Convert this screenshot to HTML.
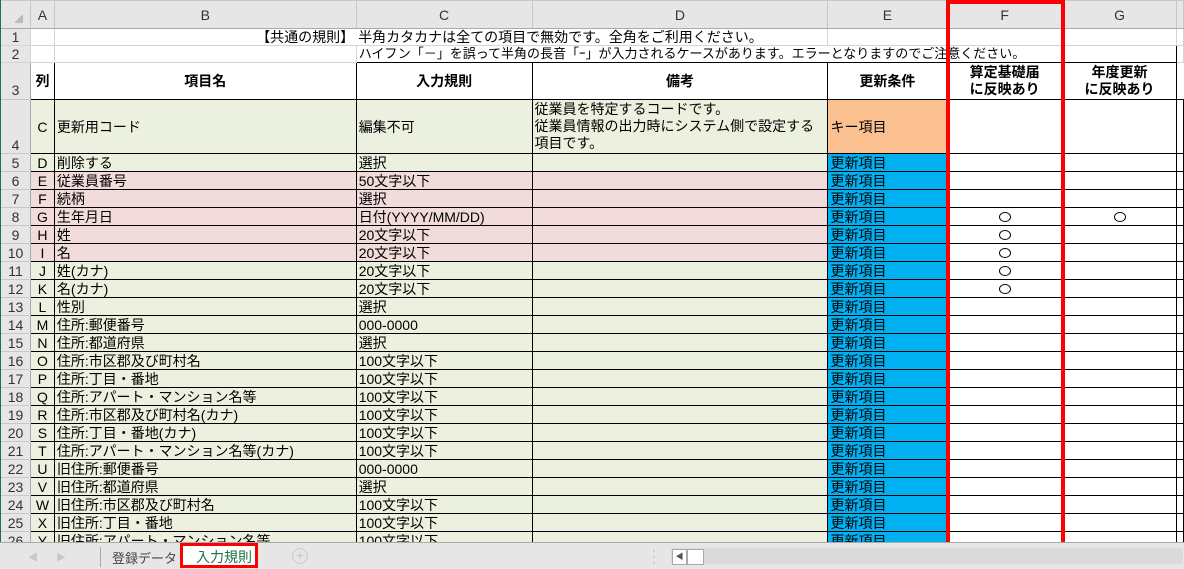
<!DOCTYPE html>
<html><head><meta charset="utf-8">
<style>
*{margin:0;padding:0;box-sizing:border-box}
body{width:1184px;height:569px;overflow:hidden;background:#fff;position:relative;font-family:"Liberation Sans","Noto Sans CJK JP",sans-serif;font-size:14px;color:#000}
table{position:absolute;left:0;top:0;border-collapse:collapse;table-layout:fixed}
td{padding:0 2px;white-space:nowrap;overflow:visible;line-height:16px;vertical-align:bottom;border:1px solid #000}
.h td{background:#e6e6e6;color:#333;text-align:center;border:1px solid #c8c8c8;border-bottom:1px solid #aaa;vertical-align:middle;font-size:14px}
td.n{background:#e6e6e6;color:#333;text-align:center;border:1px solid #c8c8c8;border-right:1px solid #aaa;font-size:14px}
.g{background:#ebf1de}.p{background:#f2dcdb}.b{background:#00b0f0}.o{background:#fac090}
.c{text-align:center}
.l td{border-color:#d4d4d4}
.hd td{font-weight:bold;text-align:center;vertical-align:middle;line-height:17px}
.ov{position:relative}
.ov span{position:absolute;left:2px;bottom:0}
i.m{display:inline-block;width:12px;height:10px;border:1px solid #000;border-radius:50%;vertical-align:middle;margin-bottom:2px}
</style></head><body>
<table>
<colgroup><col style="width:30px"><col style="width:24px"><col style="width:302px"><col style="width:176px"><col style="width:296px"><col style="width:119px"><col style="width:116px"><col style="width:114px"><col style="width:7px"></colgroup>
<tr class="h" style="height:28px"><td style="border-left:0"><span style="display:inline-block;width:0;height:0;border-left:9px solid transparent;border-bottom:9px solid #bbb;margin:10px 0 0 6px"></span></td><td>A</td><td>B</td><td>C</td><td>D</td><td>E</td><td>F</td><td>G</td><td></td></tr>
<tr class="l" style="height:17px"><td class="n">1</td><td></td><td style="text-align:right;border-right:0">【共通の規則】</td><td class="ov" style="border-left:0;border-right:0"><span>半角カタカナは全ての項目で無効です。全角をご利用ください。</span></td><td style="border-left:0"></td><td></td><td></td><td></td><td></td></tr>
<tr class="l" style="height:17px"><td class="n">2</td><td></td><td></td><td class="ov" style="border-right:0;border-bottom-color:#000"><span style="font-size:13px">ハイフン「－」を誤って半角の長音「ｰ」が入力されるケースがあります。エラーとなりますのでご注意ください。</span></td><td style="border-left:0;border-right:0;border-bottom-color:#000"></td><td style="border-left:0;border-right:0;border-bottom-color:#000"></td><td style="border-left:0;border-bottom-color:#000"></td><td style="border-bottom-color:#000;border-right-color:#000"></td><td></td></tr>
<tr class="hd" style="height:37px"><td class="n" style="vertical-align:bottom;font-weight:normal">3</td><td>列</td><td>項目名</td><td>入力規則</td><td>備考</td><td>更新条件</td><td>算定基礎届<br>に反映あり</td><td>年度更新<br>に反映あり</td><td style="border-top:1px solid #d4d4d4;border-right:0"></td></tr>
<tr style="height:54px"><td class="n">4</td><td class="g c" style="vertical-align:middle">C</td><td class="g" style="vertical-align:middle">更新用コード</td><td class="g" style="vertical-align:middle">編集不可</td><td class="g" style="vertical-align:middle;line-height:17px">従業員を特定するコードです。<br>従業員情報の出力時にシステム側で設定する<br>項目です。</td><td class="o" style="vertical-align:middle">キー項目</td><td></td><td></td><td></td></tr>
<tr style="height:18px"><td class="n">5</td><td class="g c">D</td><td class="g">削除する</td><td class="g">選択</td><td class="g"></td><td class="b">更新項目</td><td></td><td></td><td></td></tr>
<tr style="height:18px"><td class="n">6</td><td class="p c">E</td><td class="p">従業員番号</td><td class="p">50文字以下</td><td class="p"></td><td class="b">更新項目</td><td></td><td></td><td></td></tr>
<tr style="height:18px"><td class="n">7</td><td class="p c">F</td><td class="p">続柄</td><td class="p">選択</td><td class="p"></td><td class="b">更新項目</td><td></td><td></td><td></td></tr>
<tr style="height:18px"><td class="n">8</td><td class="p c">G</td><td class="p">生年月日</td><td class="p">日付(YYYY/MM/DD)</td><td class="p"></td><td class="b">更新項目</td><td class="c"><i class="m"></i></td><td class="c"><i class="m"></i></td><td></td></tr>
<tr style="height:18px"><td class="n">9</td><td class="p c">H</td><td class="p">姓</td><td class="p">20文字以下</td><td class="p"></td><td class="b">更新項目</td><td class="c"><i class="m"></i></td><td></td><td></td></tr>
<tr style="height:18px"><td class="n">10</td><td class="p c">I</td><td class="p">名</td><td class="p">20文字以下</td><td class="p"></td><td class="b">更新項目</td><td class="c"><i class="m"></i></td><td></td><td></td></tr>
<tr style="height:18px"><td class="n">11</td><td class="g c">J</td><td class="g">姓(カナ)</td><td class="g">20文字以下</td><td class="g"></td><td class="b">更新項目</td><td class="c"><i class="m"></i></td><td></td><td></td></tr>
<tr style="height:18px"><td class="n">12</td><td class="g c">K</td><td class="g">名(カナ)</td><td class="g">20文字以下</td><td class="g"></td><td class="b">更新項目</td><td class="c"><i class="m"></i></td><td></td><td></td></tr>
<tr style="height:18px"><td class="n">13</td><td class="g c">L</td><td class="g">性別</td><td class="g">選択</td><td class="g"></td><td class="b">更新項目</td><td></td><td></td><td></td></tr>
<tr style="height:18px"><td class="n">14</td><td class="g c">M</td><td class="g">住所:郵便番号</td><td class="g">000-0000</td><td class="g"></td><td class="b">更新項目</td><td></td><td></td><td></td></tr>
<tr style="height:18px"><td class="n">15</td><td class="g c">N</td><td class="g">住所:都道府県</td><td class="g">選択</td><td class="g"></td><td class="b">更新項目</td><td></td><td></td><td></td></tr>
<tr style="height:18px"><td class="n">16</td><td class="g c">O</td><td class="g">住所:市区郡及び町村名</td><td class="g">100文字以下</td><td class="g"></td><td class="b">更新項目</td><td></td><td></td><td></td></tr>
<tr style="height:18px"><td class="n">17</td><td class="g c">P</td><td class="g">住所:丁目・番地</td><td class="g">100文字以下</td><td class="g"></td><td class="b">更新項目</td><td></td><td></td><td></td></tr>
<tr style="height:18px"><td class="n">18</td><td class="g c">Q</td><td class="g">住所:アパート・マンション名等</td><td class="g">100文字以下</td><td class="g"></td><td class="b">更新項目</td><td></td><td></td><td></td></tr>
<tr style="height:18px"><td class="n">19</td><td class="g c">R</td><td class="g">住所:市区郡及び町村名(カナ)</td><td class="g">100文字以下</td><td class="g"></td><td class="b">更新項目</td><td></td><td></td><td></td></tr>
<tr style="height:18px"><td class="n">20</td><td class="g c">S</td><td class="g">住所:丁目・番地(カナ)</td><td class="g">100文字以下</td><td class="g"></td><td class="b">更新項目</td><td></td><td></td><td></td></tr>
<tr style="height:18px"><td class="n">21</td><td class="g c">T</td><td class="g">住所:アパート・マンション名等(カナ)</td><td class="g">100文字以下</td><td class="g"></td><td class="b">更新項目</td><td></td><td></td><td></td></tr>
<tr style="height:18px"><td class="n">22</td><td class="g c">U</td><td class="g">旧住所:郵便番号</td><td class="g">000-0000</td><td class="g"></td><td class="b">更新項目</td><td></td><td></td><td></td></tr>
<tr style="height:18px"><td class="n">23</td><td class="g c">V</td><td class="g">旧住所:都道府県</td><td class="g">選択</td><td class="g"></td><td class="b">更新項目</td><td></td><td></td><td></td></tr>
<tr style="height:18px"><td class="n">24</td><td class="g c">W</td><td class="g">旧住所:市区郡及び町村名</td><td class="g">100文字以下</td><td class="g"></td><td class="b">更新項目</td><td></td><td></td><td></td></tr>
<tr style="height:18px"><td class="n">25</td><td class="g c">X</td><td class="g">旧住所:丁目・番地</td><td class="g">100文字以下</td><td class="g"></td><td class="b">更新項目</td><td></td><td></td><td></td></tr>
<tr style="height:18px"><td class="n">26</td><td class="g c">Y</td><td class="g">旧住所:アパート・マンション名等</td><td class="g">100文字以下</td><td class="g"></td><td class="b">更新項目</td><td></td><td></td><td></td></tr>
</table>
<div style="position:absolute;left:0;top:0;width:1px;height:569px;background:#217346"></div>
<div style="position:absolute;left:946px;top:0;width:119px;height:546px;border:4px solid #f00"></div>
<div style="position:absolute;left:0;top:542px;width:1184px;height:27px;background:#e6e6e6;border-top:1px solid #aaa">
 <span style="position:absolute;left:28px;top:6px;color:#c8c8c8;font-size:10px">◀</span>
 <span style="position:absolute;left:56px;top:6px;color:#c8c8c8;font-size:10px">▶</span>
 <div style="position:absolute;left:100px;top:4px;width:1px;height:20px;background:#aaa"></div>
 <span style="position:absolute;left:112px;top:5px;color:#444;font-size:13px">登録データ</span>
 <div style="position:absolute;left:180px;top:0;width:78px;height:25px;background:#fff;border:3px solid #f00"></div>
 <span style="position:absolute;left:196px;top:4px;color:#217346;font-size:14px">入力規則</span>
 <div style="position:absolute;left:292px;top:5px;width:16px;height:16px;border:1px solid #c8c8c8;border-radius:50%;color:#c8c8c8;font-size:14px;line-height:13px;text-align:center">+</div>
 <span style="position:absolute;left:652px;top:4px;color:#aaa;font-size:12px;line-height:6px">·<br>·<br>·</span>
 <div style="position:absolute;left:671px;top:5px;width:512px;height:16px;background:#dadada"></div>
 <div style="position:absolute;left:672px;top:6px;width:15px;height:16px;background:#fff;border:1px solid #aaa;font-size:8px;color:#555;text-align:center;line-height:14px">◀</div>
 <div style="position:absolute;left:687px;top:6px;width:17px;height:16px;background:#fff;border:1px solid #aaa"></div>
</div>
</body></html>
